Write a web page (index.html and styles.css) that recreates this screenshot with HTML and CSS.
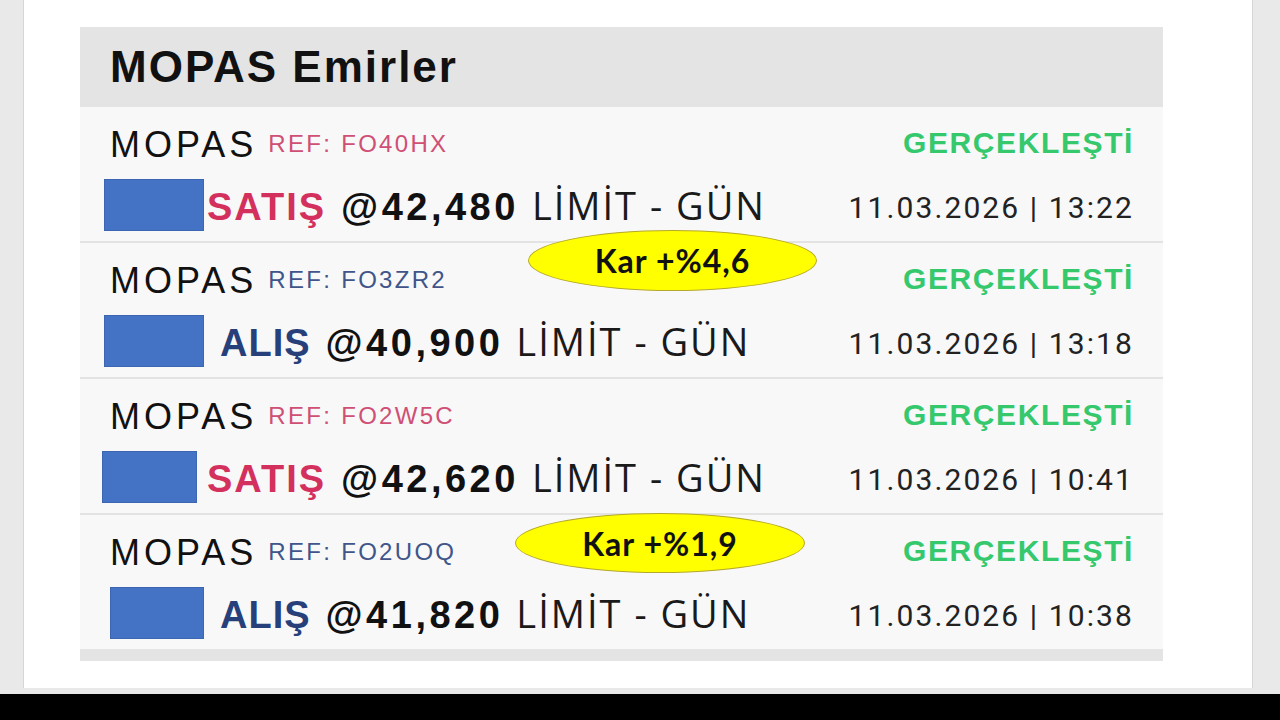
FILE: index.html
```html
<!DOCTYPE html>
<html lang="tr">
<head>
  <meta charset="UTF-8">
  <title>MOPAS Emirler</title>
  <link rel="stylesheet" href="styles.css">
</head>
<body>
  <div class="screen">
    <div class="page">
      <div class="panel">
        <div class="panel-head">MOPAS Emirler</div>

        <div class="order">
          <div class="line1">
            <span class="sym">MOPAS</span>
            <span class="ref ref-sell">REF: FO40HX</span>
            <span class="status">GERÇEKLEŞTİ</span>
          </div>
          <div class="line2">
            <div class="acct"><div class="mask"></div></div>
            <span class="side sell">SATIŞ</span>
            <span class="price">@42,480</span>
            <span class="kind">LİMİT - GÜN</span>
            <span class="date">11.03.2026 | 13:22</span>
          </div>
        </div>

        <div class="order">
          <div class="line1">
            <span class="sym">MOPAS</span>
            <span class="ref ref-buy">REF: FO3ZR2</span>
            <span class="status">GERÇEKLEŞTİ</span>
          </div>
          <div class="line2">
            <div class="acct"><div class="mask"></div></div>
            <span class="side buy">ALIŞ</span>
            <span class="price">@40,900</span>
            <span class="kind">LİMİT - GÜN</span>
            <span class="date">11.03.2026 | 13:18</span>
          </div>
        </div>

        <div class="order">
          <div class="line1">
            <span class="sym">MOPAS</span>
            <span class="ref ref-sell">REF: FO2W5C</span>
            <span class="status">GERÇEKLEŞTİ</span>
          </div>
          <div class="line2">
            <div class="acct"><div class="mask mask-left"></div></div>
            <span class="side sell">SATIŞ</span>
            <span class="price">@42,620</span>
            <span class="kind">LİMİT - GÜN</span>
            <span class="date">11.03.2026 | 10:41</span>
          </div>
        </div>

        <div class="order last">
          <div class="line1">
            <span class="sym">MOPAS</span>
            <span class="ref ref-buy">REF: FO2UOQ</span>
            <span class="status">GERÇEKLEŞTİ</span>
          </div>
          <div class="line2">
            <div class="acct"><div class="mask mask-right"></div></div>
            <span class="side buy">ALIŞ</span>
            <span class="price">@41,820</span>
            <span class="kind">LİMİT - GÜN</span>
            <span class="date">11.03.2026 | 10:38</span>
          </div>
        </div>

        <div class="panel-foot"></div>

        <div class="profit profit-1">Kar +%4,6</div>
        <div class="profit profit-2">Kar +%1,9</div>
      </div>
    </div>
  </div>
</body>
</html>
```

FILE: styles.css
```css
body {
  margin: 0;
  background: #000;
  font-family: "Liberation Sans", Arial, sans-serif;
  color: #111;
}
.screen {
  height: 694px;
  background: #e9e9e9;
  overflow: hidden;
}
.page {
  margin-left: 23px;
  width: 1230px;
  height: 688px;
  background: #fff;
  border-left: 1px solid #d6d6d6;
  border-right: 1px solid #d6d6d6;
  padding: 27px 0 0 56px;
  box-sizing: border-box;
}
.panel {
  position: relative;
  width: 1083px;
  background: #f8f8f8;
}
.panel-head {
  height: 80px;
  line-height: 80px;
  box-sizing: border-box;
  padding-left: 30px;
  background: #e4e4e4;
  font-size: 44px;
  font-weight: bold;
  letter-spacing: 2px;
  color: #111;
}
.order {
  height: 136px;
  box-sizing: border-box;
  padding: 18px 29px 0 24px;
  border-bottom: 2px solid #e3e3e3;
}
.order.last {
  height: 134px;
  border-bottom: none;
}
.line1 {
  display: flex;
  align-items: flex-start;
  height: 40px;
  padding-left: 6px;
}
.sym {
  font-size: 36px;
  line-height: 40px;
  letter-spacing: 4px;
  color: #111;
}
.ref {
  margin-left: 11px;
  font-size: 24px;
  line-height: 38px;
  letter-spacing: 2.3px;
}
.ref-sell { color: #cf4f75; }
.ref-buy { color: #40558a; }
.status {
  margin-left: auto;
  font-size: 30px;
  line-height: 36px;
  font-weight: bold;
  letter-spacing: 1.6px;
  color: #35c86d;
}
.line2 {
  display: flex;
  align-items: baseline;
  margin-top: 14px;
  height: 52px;
}
.acct {
  align-self: flex-start;
  flex: none;
  width: 100px;
  height: 52px;
}
.mask {
  width: 100px;
  height: 52px;
  box-sizing: border-box;
  background: #4472c4;
  border: 1px solid #3c65b2;
}
.mask-left { margin-left: -2px; width: 95px; }
.mask-right { margin-left: 6px; width: 94px; }
.side {
  font-size: 38px;
  line-height: 52px;
  font-weight: bold;
  letter-spacing: 2px;
}
.side.sell { margin-left: 3px; color: #d3305d; }
.side.buy { margin-left: 16px; color: #27407a; letter-spacing: 1px; }
.price {
  margin-left: 15px;
  font-size: 38px;
  line-height: 52px;
  font-weight: bold;
  letter-spacing: 3.5px;
  color: #111;
}
.kind {
  margin-left: 13px;
  font-family: "Open Sans", sans-serif;
  font-size: 38px;
  line-height: 52px;
  letter-spacing: 2px;
  color: #1a1a1a;
}
.date {
  align-self: flex-start;
  margin-left: auto;
  font-family: Roboto, sans-serif;
  font-size: 30px;
  line-height: 57px;
  letter-spacing: 2.1px;
  color: #222;
}
.panel-foot {
  height: 12px;
  background: #e4e4e4;
}
.profit {
  position: absolute;
  display: flex;
  align-items: center;
  justify-content: center;
  box-sizing: border-box;
  background: #ffff00;
  border: 1px solid #b5a82a;
  border-radius: 50%;
  font-family: Lato, sans-serif;
  font-size: 32px;
  font-weight: bold;
  letter-spacing: 1px;
  color: #111;
}
.profit-1 { left: 448px; top: 203px; width: 289px; height: 61px; }
.profit-2 { left: 435px; top: 486px; width: 290px; height: 60px; }
```
